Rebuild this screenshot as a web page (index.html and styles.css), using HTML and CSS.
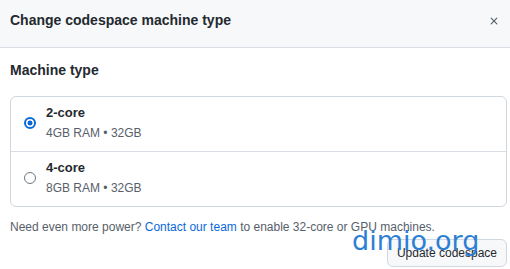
FILE: index.html
```html
<!DOCTYPE html>
<html lang="en">
<head>
    <meta charset="UTF-8">
    <title>Change codespace machine type</title>
    <link rel="stylesheet" href="styles.css">
</head>
<body>
    <div class="dialog">
        <div class="dialog-header">
            <h1 class="dialog-title">Change codespace machine type</h1>
            <button class="close-btn" aria-label="Close">
                <svg width="12" height="12" viewBox="0 0 16 16"><path d="M3.72 3.72a.75.75 0 0 1 1.06 0L8 6.94l3.22-3.22a.75.75 0 1 1 1.06 1.06L9.06 8l3.22 3.22a.75.75 0 1 1-1.06 1.06L8 9.06l-3.22 3.22a.75.75 0 0 1-1.06-1.06L6.94 8 3.72 4.78a.75.75 0 0 1 0-1.06Z"/></svg>
            </button>
        </div>

        <div class="dialog-body">
            <h2 class="section-title">Machine type</h2>

            <div class="machine-list">
                <label class="machine">
                    <span class="radio checked"></span>
                    <span class="machine-info">
                        <span class="machine-name">2-core</span>
                        <span class="machine-spec">4GB RAM • 32GB</span>
                    </span>
                </label>
                <label class="machine">
                    <span class="radio"></span>
                    <span class="machine-info">
                        <span class="machine-name">4-core</span>
                        <span class="machine-spec">8GB RAM • 32GB</span>
                    </span>
                </label>
            </div>

            <p class="note">Need even more power? <a href="#">Contact our team</a> to enable 32-core or GPU machines.</p>

            <div class="actions">
                <button class="btn">Update codespace</button>
            </div>
        </div>

        <div class="watermark">dimio.org</div>
    </div>
</body>
</html>
```

FILE: styles.css
```css
body {
    margin: 0;
    font-family: "Liberation Sans", Arial, sans-serif;
    background: #fff;
    color: #24292f;
}
.dialog {
    position: relative;
    width: 510px;
    height: 269px;
    overflow: hidden;
}
.dialog-header {
    display: flex;
    align-items: flex-start;
    justify-content: space-between;
    height: 47px;
    box-sizing: content-box;
    padding: 0 10px;
    background: #f6f8fa;
    border-bottom: 1px solid #d8dee4;
}
.dialog-title {
    margin: 12px 0 0;
    font-size: 14px;
    font-weight: 700;
    line-height: 16px;
}
.close-btn {
    display: flex;
    margin-top: 15px;
    padding: 0;
    border: none;
    background: none;
    fill: #57606a;
}
.dialog-body {
    padding: 14px 3px 0 10px;
}
.section-title {
    margin: 0 0 18px;
    font-size: 14px;
    font-weight: 700;
    line-height: 16px;
}
.machine-list {
    border: 1px solid #d0d7de;
    border-radius: 6px;
}
.machine {
    display: flex;
    align-items: flex-start;
    gap: 10px;
    height: 54px;
    box-sizing: border-box;
    padding: 8px 13px 0;
}
.machine + .machine {
    border-top: 1px solid #d8dee4;
    height: 55px;
}
.radio {
    width: 12px;
    height: 12px;
    margin-top: 12px;
    border: 1.5px solid #6e7781;
    border-radius: 50%;
    box-sizing: border-box;
}
.radio.checked {
    border: 2px solid #0969da;
    background: radial-gradient(circle, #0969da 0 2.2px, #fff 2.8px);
}
.machine-info {
    display: flex;
    flex-direction: column;
    gap: 6px;
}
.machine-name {
    font-size: 13px;
    font-weight: 700;
    line-height: 15px;
}
.machine-spec {
    font-size: 12px;
    line-height: 14px;
    color: #57606a;
}
.note {
    margin: 13px 0 0;
    font-size: 12px;
    color: #57606a;
}
.note a {
    color: #0969da;
    text-decoration: none;
}
.actions {
    display: flex;
    justify-content: flex-end;
    margin-top: 5px;
}
.btn {
    height: 28px;
    padding: 0 9px;
    font-family: inherit;
    font-size: 12px;
    color: #24292f;
    background: #f6f8fa;
    border: 1px solid #d0d7de;
    border-radius: 6px;
}
.watermark {
    position: absolute;
    left: 352px;
    top: 225px;
    font-family: "DejaVu Sans", sans-serif;
    font-size: 27px;
    color: #2d7fd3;
}
```
